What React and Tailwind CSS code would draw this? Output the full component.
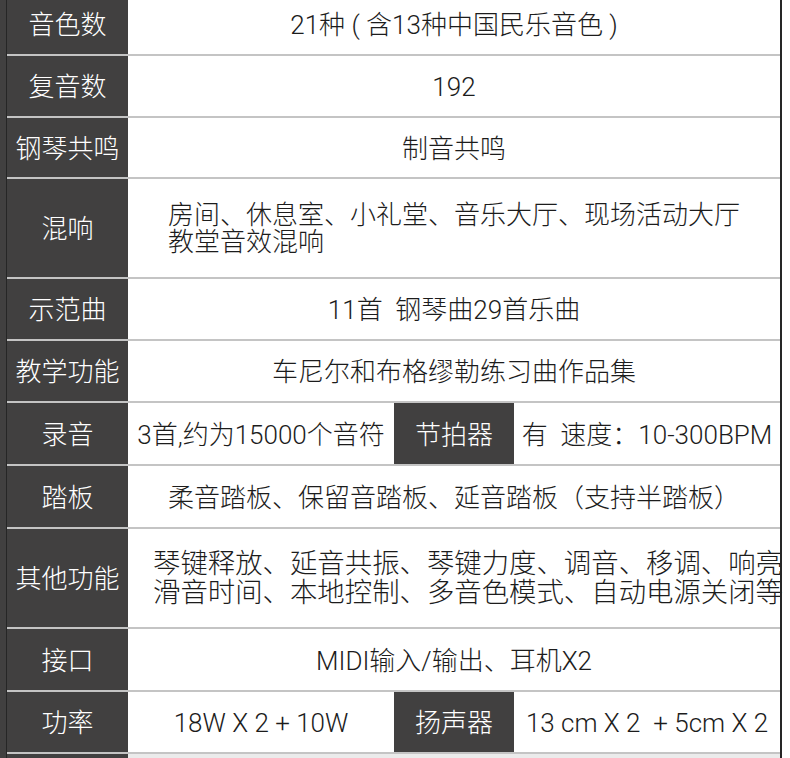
import React from "react";

const DARK = "bg-[#414040]";

function Label({ children }) {
  return (
    <div className={`w-[121px] shrink-0 ${DARK} text-white flex items-center justify-center text-[26px] leading-none pt-[2px]`}>
      {children}
    </div>
  );
}

function Line() {
  return <div className="h-[2px] bg-[#c4c4c4] shrink-0" />;
}

function Row({ hClass, label, children }) {
  return (
    <>
      <div className={`flex shrink-0 ${hClass}`}>
        <Label>{label}</Label>
        <div className="flex-1 flex items-center justify-center text-[26px] leading-none text-[#1c1c1c] whitespace-pre pt-[2px]">
          {children}
        </div>
      </div>
      <Line />
    </>
  );
}

function SplitRow({ hClass, label, left, midLabel, right }) {
  return (
    <>
      <div className={`flex shrink-0 ${hClass}`}>
        <Label>{label}</Label>
        <div className="w-[266px] shrink-0 flex items-center justify-center text-[26px] leading-none text-[#1c1c1c] whitespace-pre pt-[2px]">
          {left}
        </div>
        <div className={`w-[120px] shrink-0 ${DARK} text-white flex items-center justify-center text-[26px] leading-none pt-[2px]`}>
          {midLabel}
        </div>
        <div className="w-[266px] shrink-0 flex items-center justify-center text-[26px] leading-none text-[#1c1c1c] whitespace-pre pt-[2px]">
          {right}
        </div>
      </div>
      <Line />
    </>
  );
}

export default function App() {
  return (
    <div className="w-[790px] h-[758px] overflow-hidden bg-white flex font-light font-['Roboto','Noto_Sans_CJK_SC',sans-serif]">
      <div className={`w-[6px] shrink-0 ${DARK}`} />
      <div className="w-px shrink-0 bg-[#262626]" />
      <div className="w-[773px] shrink-0 flex flex-col -mt-[6px]">
        <Row hClass="h-[60px]" label="音色数">{"21种 ( 含13种中国民乐音色 )"}</Row>
        <Row hClass="h-[60px]" label="复音数">192</Row>
        <Row hClass="h-[59px]" label="钢琴共鸣">制音共鸣</Row>
        <>
          <div className="flex shrink-0 h-[98px]">
            <Label>混响</Label>
            <div className="flex-1 flex items-center justify-center text-[26px] leading-[27px] text-[#1c1c1c] pt-[2px]">
              <div className="text-left whitespace-nowrap">
                <div>房间、休息室、小礼堂、音乐大厅、现场活动大厅</div>
                <div>教堂音效混响</div>
              </div>
            </div>
          </div>
          <Line />
        </>
        <Row hClass="h-[60px]" label="示范曲">{"11首  钢琴曲29首乐曲"}</Row>
        <Row hClass="h-[60px]" label="教学功能">车尼尔和布格缪勒练习曲作品集</Row>
        <SplitRow
          hClass="h-[61px]"
          label="录音"
          left="3首,约为15000个音符"
          midLabel="节拍器"
          right={"有  速度：10-300BPM"}
        />
        <Row hClass="h-[61px]" label="踏板">柔音踏板、保留音踏板、延音踏板（支持半踏板）</Row>
        <>
          <div className="flex shrink-0 h-[98px]">
            <Label>其他功能</Label>
            <div className="flex-1 flex items-center pl-[25px] text-[27.4px] leading-[29px] text-[#1c1c1c] pt-[2px]">
              <div className="text-left whitespace-nowrap">
                <div>琴键释放、延音共振、琴键力度、调音、移调、响亮</div>
                <div>滑音时间、本地控制、多音色模式、自动电源关闭等</div>
              </div>
            </div>
          </div>
          <Line />
        </>
        <Row hClass="h-[61px]" label="接口">MIDI输入/输出、耳机X2</Row>
        <SplitRow
          hClass="h-[60px]"
          label="功率"
          left="18W X 2 + 10W"
          midLabel="扬声器"
          right={"13 cm X 2  + 5cm X 2"}
        />
        <div className="flex shrink-0 h-[20px]">
          <div className={`w-[121px] shrink-0 ${DARK}`} />
          <div className="flex-1 bg-[#ebebeb]" />
        </div>
      </div>
      <div className="w-[2px] shrink-0 bg-[#262626]" />
    </div>
  );
}
